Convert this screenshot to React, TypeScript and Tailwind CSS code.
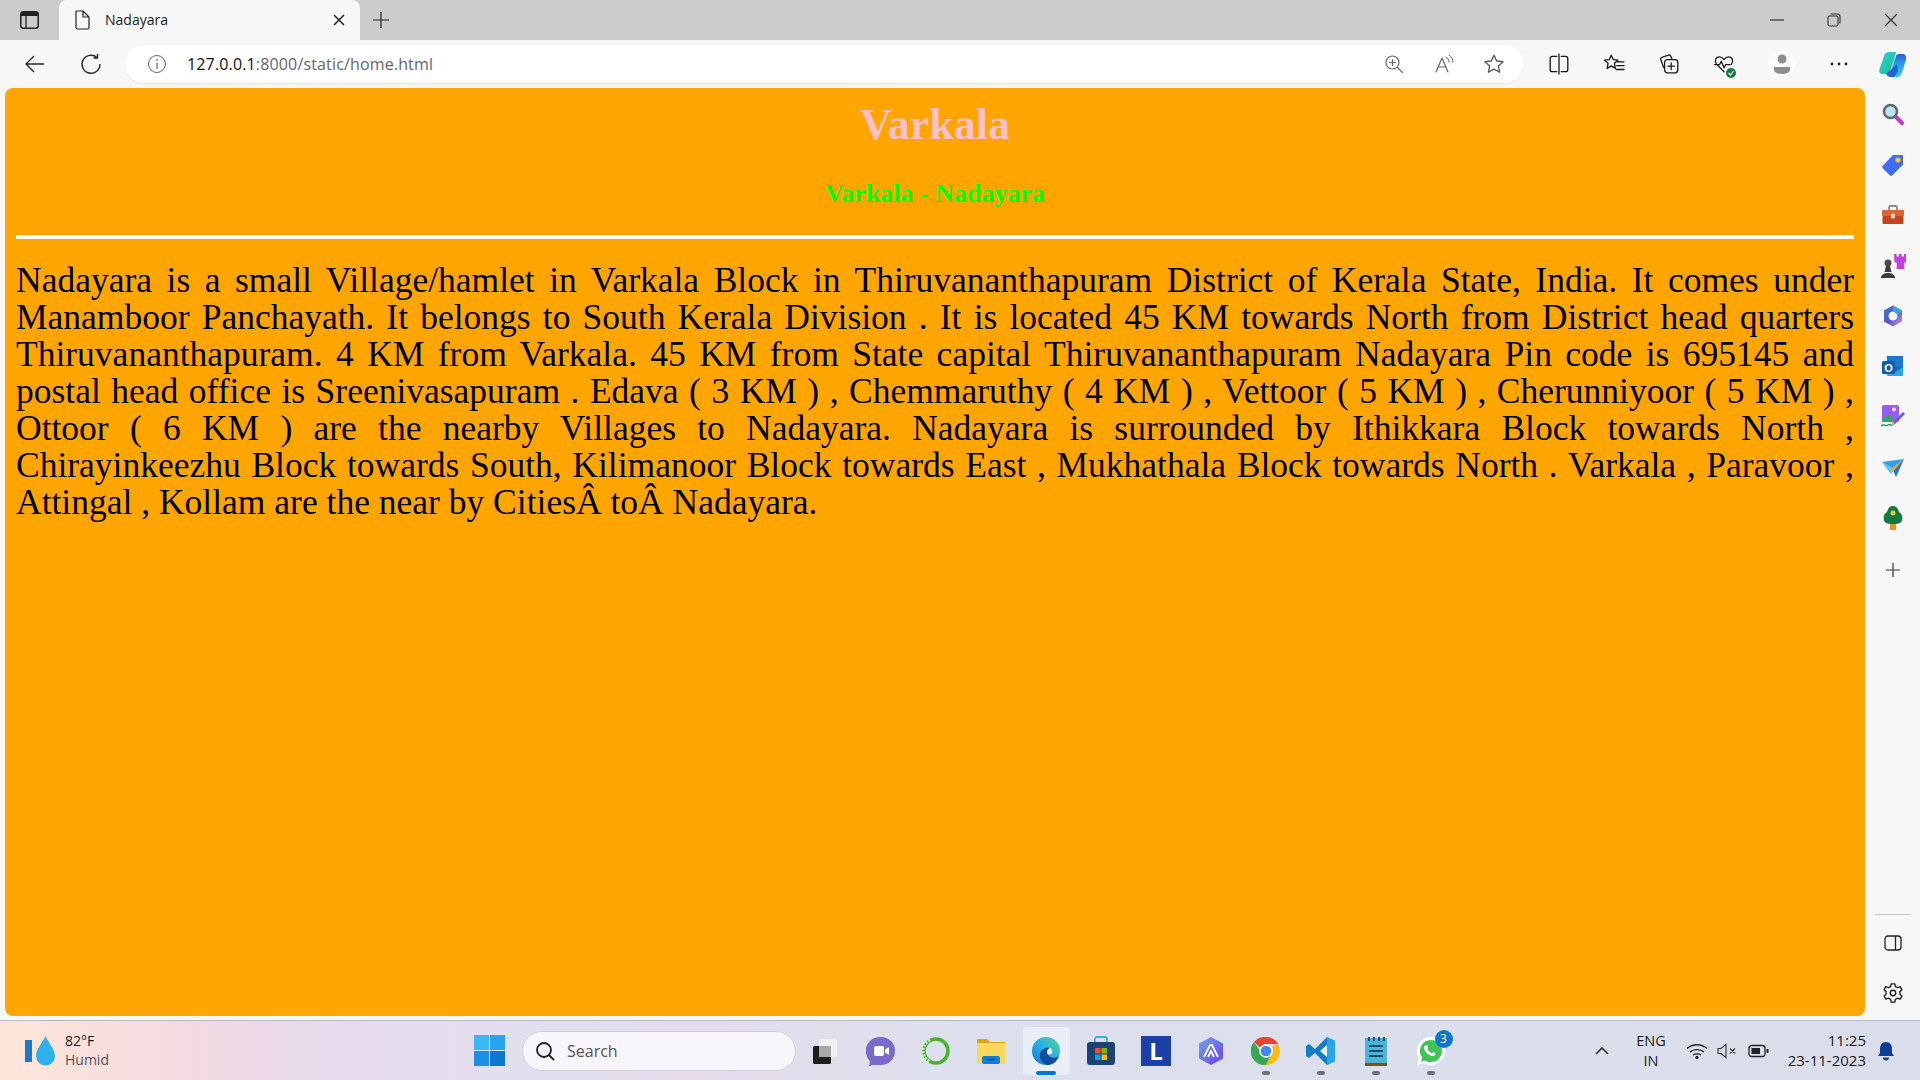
import React from 'react';

const ui = { fontFamily: '"Open Sans", "Noto Sans", sans-serif' };

const Stroke = ({ size = 20, children }: { size?: number; children: React.ReactNode }) => (
  <svg width={size} height={size} viewBox="0 0 20 20" fill="none" stroke="currentColor" strokeWidth="1.2" strokeLinecap="round" strokeLinejoin="round">
    {children}
  </svg>
);

const Slot = ({ w, children }: { w: string; children?: React.ReactNode }) => (
  <div className={`${w} flex shrink-0 items-center justify-center`}>{children}</div>
);

const Copilot = () => (
  <svg width="30" height="27" viewBox="0 0 30 27">
    <defs>
      <linearGradient id="cp1" x1="0" y1="0" x2="1" y2="1"><stop offset="0" stopColor="#35c6f0" /><stop offset=".6" stopColor="#1fc8a0" /><stop offset="1" stopColor="#2f9fe8" /></linearGradient>
      <linearGradient id="cp2" x1="0" y1="0" x2="0" y2="1"><stop offset="0" stopColor="#2b5fd9" /><stop offset=".5" stopColor="#2aa3f0" /><stop offset="1" stopColor="#38c8f5" /></linearGradient>
    </defs>
    <path d="M11 1h7l-2 8-5 14H5C2 23 .5 21 1.500 18L6 5c.7-2.500 2.500-4 5-4z" fill="url(#cp1)" />
    <path d="M19 26h-8l3-9 4-12c.5-1.500 2-2 4-2h2.500c3 0 4.500 2.500 3.500 5.500l-4 13c-.7 2.500-2.500 4.500-5 4.500z" fill="url(#cp2)" />
    <path d="M8 23l11-10 1 8-4 5h-4c-1.500 0-3-1-4-3z" fill="#1f55cf" opacity=".85" />
  </svg>
);

const SideIcons = [
  <svg key="s" width="24" height="24" viewBox="0 0 24 24"><path d="M14 14l7 7" stroke="#c637c9" strokeWidth="4" strokeLinecap="round" /><circle cx="9.500" cy="9.500" r="6.500" fill="#bfe3f5" stroke="#5d6a72" strokeWidth="2.500" /></svg>,
  <svg key="t" width="24" height="24" viewBox="0 0 24 24"><path d="M12 2h9a1 1 0 0 1 1 1v8.500L11 22.500a1.500 1.500 0 0 1-2 0L1.500 15a1.500 1.500 0 0 1 0-2z" fill="#3f6df2" /><circle cx="17" cy="7" r="2.500" fill="#f6c83c" stroke="#c9a12c" strokeWidth=".6" /></svg>,
  <svg key="b" width="24" height="24" viewBox="0 0 24 24"><path d="M8 7V4.500A1.500 1.500 0 0 1 9.500 3h5A1.500 1.500 0 0 1 16 4.500V7" fill="none" stroke="#8a8a8a" strokeWidth="1.800" /><rect x="1" y="7" width="22" height="6" rx="1" fill="#e0622e" /><rect x="1.500" y="13" width="21" height="8" rx="1" fill="#c2451c" /><rect x="10" y="10.500" width="4" height="5" rx="1" fill="#d5d5d5" /></svg>,
  <svg key="c" width="26" height="26" viewBox="0 0 26 26"><path d="M14 1h2.500v2.500h2.500V1h2.500v2.500H24V1h2v8l-2 1 .5 6h-8l.5-6-2.500-1z" fill="#c23fe6" /><circle cx="8" cy="10" r="3.500" fill="#4a4a4a" /><path d="M6 13h4l1.500 6h-7zM1 25c0-3 2.500-5 7-5s7 2 7 5z" fill="#3c3c3c" /></svg>,
  <svg key="m" width="24" height="24" viewBox="0 0 24 24"><defs><linearGradient id="m3" x1="0" y1="0" x2="1" y2="1"><stop offset="0" stopColor="#2b7cd3" /><stop offset=".5" stopColor="#5b54c9" /><stop offset="1" stopColor="#c99ae8" /></linearGradient></defs><path d="M12 1.500l9 5v11l-9 5-9-5v-11z" fill="url(#m3)" /><circle cx="12" cy="12" r="4.500" fill="#f7f7f7" /><path d="M12 1.500l9 5-4 4-5-3z" fill="#37a6e8" /></svg>,
  <svg key="o" width="24" height="24" viewBox="0 0 24 24"><rect x="6" y="1" width="16" height="11" fill="#1a78d0" /><path d="M6 12h16v8a1 1 0 0 1-1 1H7a1 1 0 0 1-1-1z" fill="#28a8ea" /><path d="M6 12l8 5 8-5" fill="#0f6cbd" /><rect x="1" y="6" width="13" height="13" rx="1.500" fill="#0f5fa8" /><text x="7.500" y="16.500" textAnchor="middle" fontSize="11" fontWeight="700" fill="#fff" fontFamily="Liberation Sans">O</text></svg>,
  <svg key="i" width="26" height="26" viewBox="0 0 26 26"><rect x="2" y="1" width="17" height="17" rx="2" fill="#9a5cf0" /><circle cx="14" cy="5.500" r="2" fill="#ede3ff" /><path d="M2 16l6-6 6 6v2H2z" fill="#2fa866" /><path d="M13 18l10-10 2 2-10 10-3 1z" fill="#6a5ae8" /><path d="M13 18l2 2-3 2z" fill="#f4b63e" /><path d="M1 22c3-3 4 1 7-1s3 1 4 0" fill="none" stroke="#1c9c6a" strokeWidth="1.400" /></svg>,
  <svg key="p" width="24" height="24" viewBox="0 0 24 24"><path d="M1 6l22-3-12 9z" fill="#2da0ee" /><path d="M23 3L11 12l4 9z" fill="#1878d8" /><path d="M23 3L11 12l-1 6z" fill="#f4a21f" /><path d="M1 6l10 6-1 6z" fill="#58bdf5" /></svg>,
  <svg key="g" width="24" height="26" viewBox="0 0 24 26"><rect x="9" y="17" width="6" height="8" fill="#e8951f" /><path d="M12 1c4 0 5 3 6 6 3 2 4 5 3 8-.5 3-3 4-9 4s-8.500-1-9-4c-1-3 0-6 3-8 1-3 2-6 6-6z" fill="#127a3e" /><circle cx="12" cy="8" r="2.500" fill="#f4c430" /></svg>,
];

const Toolbar = () => (
  <div className="flex h-12 shrink-0 items-center bg-[#f7f7f7] text-[#1b1b1b]">
    <Slot w="w-[70px]">
      <svg width="22" height="22" viewBox="0 0 22 22" fill="none" stroke="#2a2a2a" strokeWidth="1.400"><path d="M20 11H2M10 3l-8 8 8 8" /></svg>
    </Slot>
    <Slot w="w-[42px]">
      <svg width="22" height="22" viewBox="0 0 22 22" fill="none" stroke="#2a2a2a" strokeWidth="1.400"><path d="M17 4.500A9 9 0 1 0 20 11M17.500 1v4h-4" /></svg>
    </Slot>
    <div className="w-[13px] shrink-0" />
    <div className="flex h-[38px] w-[1399px] shrink-0 items-center rounded-[19px] bg-white shadow-[0_1px_2px_rgba(0,0,0,0.08)]">
      <Slot w="w-[64px]">
        <Stroke>
          <circle cx="10" cy="10" r="8.500" stroke="#666" strokeWidth="1" />
          <path d="M10 9v5.500" stroke="#666" />
          <path d="M10 5.800v.4" stroke="#666" strokeWidth="1.500" />
        </Stroke>
      </Slot>
      <div className="-ml-0.5 flex-1 text-[16px] tracking-[0.15px]" style={ui}>
        <span className="text-[#111]">127.0.0.1</span>
        <span className="text-[#66666b]">:8000/static/home.html</span>
      </div>
      <Slot w="w-[50px]">
        <Stroke>
          <circle cx="8.500" cy="8.500" r="6.500" stroke="#666" />
          <path d="M13.500 13.500L18.500 18.500M8.500 5.500v6M5.500 8.500h6" stroke="#666" />
        </Stroke>
      </Slot>
      <Slot w="w-[50px]">
        <Stroke>
          <path d="M2 18L8 4l6 14M4.500 13h7" stroke="#666" />
          <path d="M12 3c2 1 3 3 3 5M15 1c2.500 1.500 4 4 4 7" stroke="#666" strokeWidth="1" />
        </Stroke>
      </Slot>
      <Slot w="w-[50px]">
        <Stroke size={22}>
          <path d="M10 2l2.400 5.300 5.800.6-4.300 3.900 1.200 5.700L10 14.600l-5.100 2.900 1.200-5.700L1.800 7.900l5.800-.6z" stroke="#555" />
        </Stroke>
      </Slot>
      <div className="w-[5px] shrink-0" />
    </div>
    <div className="w-[7px] shrink-0" />
    <Slot w="w-[55px]">
      <Stroke size={22}>
        <path d="M8 3H4a2 2 0 0 0-2 2v10a2 2 0 0 0 2 2h4M12 3h4a2 2 0 0 1 2 2v10a2 2 0 0 1-2 2h-4M10 1v18" />
      </Stroke>
    </Slot>
    <Slot w="w-[55px]">
      <Stroke size={22}>
        <path d="M7.500 2l1.800 4 4.200.5-3.100 2.900.8 4.600-3.700-2.300L3.800 14l.8-4.600L1.500 6.500 5.700 6zM13 8h6M12.500 11.500H19M12 15h7" />
      </Stroke>
    </Slot>
    <Slot w="w-[55px]">
      <Stroke size={22}>
        <path d="M5 13L2.500 6a1.500 1.500 0 0 1 1-2l6-2a1.500 1.500 0 0 1 2 .7L12.500 5" />
        <rect x="6" y="6" width="12" height="12" rx="2.500" />
        <path d="M12 9v6M9 12h6" />
      </Stroke>
    </Slot>
    <div className="relative flex w-[55px] shrink-0 items-center justify-center">
      <Stroke size={22}>
        <path d="M10 17L3.500 10.500C1 8 2 3.500 6 3.500c2 0 3 1.200 4 2.500 1-1.300 2-2.500 4-2.500 4 0 5 4.500 2.500 7" />
        <path d="M1.500 10.500H6l1.500-3 2.500 6 1.500-3h4" />
      </Stroke>
      <div className="absolute bottom-[-3px] left-[30px] flex h-[10px] w-[10px] items-center justify-center rounded-full bg-[#107c41]">
        <svg width="8" height="8" viewBox="0 0 8 8" fill="none" stroke="#fff" strokeWidth="1.200"><path d="M1.500 4l2 2 3-4" /></svg>
      </div>
    </div>
    <Slot w="w-[60px]">
      <div className="ml-0.5 flex h-[28px] w-[28px] items-center justify-center rounded-full bg-[#fbfbfb]">
        <svg width="18" height="22" viewBox="0 0 18 22" fill="#8e8e8e"><circle cx="9" cy="6" r="4.500" /><path d="M1 14h16v2.500c0 3-3.500 4.500-8 4.500s-8-1.500-8-4.500z" /></svg>
      </div>
    </Slot>
    <Slot w="w-[55px]">
      <svg width="20" height="4" viewBox="0 0 20 4" fill="#222"><circle cx="3" cy="2" r="1.400" /><circle cx="10" cy="2" r="1.400" /><circle cx="17" cy="2" r="1.400" /></svg>
    </Slot>
    <Slot w="w-[54px]"><Copilot /></Slot>
  </div>
);

const TabStrip = () => (
  <div className="flex h-10 shrink-0 bg-[#cccccc] text-[#1b1b1b]">
    <Slot w="w-[59px]">
      <svg width="19" height="18" viewBox="0 0 19 18">
        <rect x=".8" y=".8" width="17.400" height="16.400" rx="2.500" fill="none" stroke="#222" strokeWidth="1.500" />
        <path d="M1 3a2 2 0 0 1 2-2h13a2 2 0 0 1 2 2v2H1z" fill="#222" />
        <path d="M6 5v12" stroke="#222" strokeWidth="1.300" />
      </svg>
    </Slot>
    <div className="flex w-[301px] shrink-0 items-center rounded-t-lg bg-[#f7f7f7]">
      <Slot w="w-[46px]">
        <svg width="16" height="20" viewBox="0 0 16 20" fill="none" stroke="#222" strokeWidth="1.200" strokeLinejoin="round"><path d="M3 1h6l6 6v10.500a1.500 1.500 0 0 1-1.500 1.500h-10A1.500 1.500 0 0 1 2 17.500V2a1 1 0 0 1 1-1zM9 1v6h6" /></svg>
      </Slot>
      <span className="-mt-0.5 flex-1 text-[14px] text-[#222]" style={ui}>Nadayara</span>
      <Slot w="w-[42px]">
        <svg width="12" height="12" viewBox="0 0 12 12" stroke="#222" strokeWidth="1.500"><path d="M1 1l10 10M11 1L1 11" /></svg>
      </Slot>
    </div>
    <Slot w="w-[42px]">
      <svg width="18" height="18" viewBox="0 0 18 18" stroke="#222" strokeWidth="1.200"><path d="M9 1v16M1 9h16" /></svg>
    </Slot>
    <div className="flex-1" />
    <Slot w="w-[57px]">
      <svg width="14" height="2" viewBox="0 0 14 2" stroke="#333" strokeWidth="1.200"><path d="M0 1h14" /></svg>
    </Slot>
    <Slot w="w-[57px]">
      <svg width="14" height="14" viewBox="0 0 14 14" fill="none" stroke="#333" strokeWidth="1.100"><rect x="1" y="3" width="10" height="10" rx="1.500" /><path d="M3.500 1h7A2.500 2.500 0 0 1 13 3.500v7" /></svg>
    </Slot>
    <Slot w="w-[58px]">
      <svg width="14" height="14" viewBox="0 0 14 14" stroke="#333" strokeWidth="1.200"><path d="M1 1l12 12M13 1L1 13" /></svg>
    </Slot>
  </div>
);

const Sidebar = () => (
  <div className="flex w-[55px] shrink-0 flex-col items-center pt-px">
    {SideIcons.map((icon) => (
      <div key={icon.key} className="flex h-[50.500px] w-full items-center justify-center">{icon}</div>
    ))}
    <div className="flex h-[52px] items-center justify-center text-[#333]">
      <svg width="18" height="18" viewBox="0 0 18 18" stroke="#333" strokeWidth="1.200"><path d="M9 2v14M2 9h14" /></svg>
    </div>
    <div className="flex-1" />
    <div className="h-px w-[35px] bg-[#c4c4c4]" />
    <div className="flex h-[56px] items-center justify-center">
      <svg width="18" height="16" viewBox="0 0 18 16" fill="none" stroke="#222" strokeWidth="1.300"><rect x="1" y="1" width="16" height="14" rx="3" /><path d="M11.500 1v14" /></svg>
    </div>
    <div className="mb-[5px] flex h-[44px] items-center justify-center">
      <svg width="22" height="22" viewBox="0 0 24 24" fill="none" stroke="#222" strokeWidth="1.500" strokeLinejoin="round"><circle cx="12" cy="12" r="3" /><path d="M10 2h4l.6 3 2.400 1.200 2.800-1.100 2 3.400-2.300 2 .1 2.800 2.200 1.900-2 3.400-2.800-1-2.400 1.400L14 22h-4l-.6-3-2.400-1.400-2.800 1-2-3.400 2.200-1.900.1-2.800-2.300-2 2-3.400 2.800 1.100L9.400 5z" /></svg>
    </div>
  </div>
);

const justified = [
  'Nadayara is a small Village/hamlet in Varkala Block in Thiruvananthapuram District of Kerala State, India. It comes under',
  'Manamboor Panchayath. It belongs to South Kerala Division . It is located 45 KM towards North from District head quarters',
  'Thiruvananthapuram. 4 KM from Varkala. 45 KM from State capital Thiruvananthapuram Nadayara Pin code is 695145 and',
  'postal head office is Sreenivasapuram . Edava ( 3 KM ) , Chemmaruthy ( 4 KM ) , Vettoor ( 5 KM ) , Cherunniyoor ( 5 KM ) ,',
  'Ottoor ( 6 KM ) are the nearby Villages to Nadayara. Nadayara is surrounded by Ithikkara Block towards North ,',
  'Chirayinkeezhu Block towards South, Kilimanoor Block towards East , Mukhathala Block towards North . Varkala , Paravoor ,',
];

const Page = () => (
  <div className="h-[928px] w-[1860px] shrink-0 rounded-lg bg-[#ffa500] px-[11px] font-['Liberation_Serif',serif]">
    <h1 className="pt-[13px] text-center text-[44px] leading-[48px] font-bold text-[#ffc0cb]">Varkala</h1>
    <h2 className="mt-[31px] text-center text-[26px] leading-[28px] font-bold text-[#00ff00]">Varkala - Nadayara</h2>
    <div className="mt-[27px] h-1 bg-white" />
    <div className="mt-[23px] text-[35.500px] leading-[37px] text-black">
      {justified.map((line) => (
        <p key={line} className="whitespace-nowrap text-justify [text-align-last:justify]">{line}</p>
      ))}
      <p>Attingal , Kollam are the near by CitiesÂ toÂ Nadayara.</p>
    </div>
  </div>
);

const AppIcons = [
  <svg key="tv" width="30" height="30" viewBox="0 0 30 30"><rect x="2" y="10" width="18" height="18" rx="1.500" fill="#1d1d1d" /><rect x="8" y="3" width="18" height="18" rx="1.500" fill="#f2f2f2" opacity=".85" /><rect x="8" y="10" width="12" height="11" fill="#a8a8a8" /></svg>,
  <svg key="meet" width="30" height="30" viewBox="0 0 30 30"><path d="M15 1a14 14 0 0 1 0 28H6l-3 2 1-6A14 14 0 0 1 15 1z" fill="#7b6ac9" /><rect x="8" y="10" width="10" height="10" rx="2" fill="#fff" /><path d="M19 13.500l4-2.500v8l-4-2.500z" fill="#fff" /></svg>,
  <svg key="ring" width="30" height="30" viewBox="0 0 30 30" fill="none"><circle cx="15" cy="15" r="12" stroke="#46b52c" strokeWidth="3.500" /><path d="M9 4a12 12 0 0 0 0 22" stroke="#cfe8c8" strokeWidth="3.500" strokeDasharray="2 1.500" /></svg>,
  <svg key="f" width="30" height="30" viewBox="0 0 30 30"><path d="M1 4a1 1 0 0 1 1-1h9l3 3h15v5H1z" fill="#dca313" /><path d="M1 7h28v21H1z" fill="#fbd75b" /><rect x="6" y="20" width="18" height="8" rx="2" fill="#0f7fd1" /><path d="M11 23.500h8" stroke="#0a4f88" strokeWidth="1.500" /></svg>,
  <svg key="e" width="30" height="30" viewBox="0 0 30 30"><defs><linearGradient id="ed" x1="0" y1="1" x2="1" y2="0"><stop offset="0" stopColor="#0b78d8" /><stop offset=".55" stopColor="#2bb3e6" /><stop offset="1" stopColor="#54d873" /></linearGradient></defs><circle cx="15" cy="15" r="14" fill="url(#ed)" /><path d="M28 20c-2 1.500-4.500 2-7 1.500-3-.5-5-3-5-5.500s1-3 3-4c-3-1-9 0-10 6-1 5 3 11 8 11 5 0 9-4 11-9z" fill="#0c4da0" /><path d="M19 12c2 1 3 3 2 5s-4 2-5 0c0-3 1-4 3-5z" fill="#f0f3fa" /></svg>,
  <svg key="st" width="30" height="30" viewBox="0 0 30 30"><path d="M9 6V3a2 2 0 0 1 2-2h8a2 2 0 0 1 2 2v3" fill="none" stroke="#2cb3e8" strokeWidth="1.800" /><rect x="1" y="6" width="28" height="23" rx="3" fill="#1d4470" /><rect x="9" y="12" width="5.500" height="5.500" fill="#f25022" /><rect x="15.500" y="12" width="5.500" height="5.500" fill="#7fba00" /><rect x="9" y="18.500" width="5.500" height="5.500" fill="#00a4ef" /><rect x="15.500" y="18.500" width="5.500" height="5.500" fill="#ffb900" /></svg>,
  <div key="l" className="flex h-[30px] w-[30px] items-center justify-center bg-[#1c3fa8] text-[24px] leading-none font-bold text-white" style={ui}>L</div>,
  <svg key="a" width="30" height="30" viewBox="0 0 30 30"><defs><linearGradient id="ar" x1="0" y1="0" x2="1" y2="1"><stop offset="0" stopColor="#6ea6ec" /><stop offset="1" stopColor="#6a3ff0" /></linearGradient></defs><path d="M15 1l12 6.500v15L15 29 3 22.500v-15z" fill="url(#ar)" /><path d="M8 21l6-12 2 0 6 12M12 21l3-6 3 6" fill="none" stroke="#fff" strokeWidth="1.800" /></svg>,
  <svg key="c" width="30" height="30" viewBox="0 0 30 30"><path d="M15 1a14 14 0 0 1 12.100 7H15a7 7 0 0 0-6.100 3.500L3 5.900A14 14 0 0 1 15 1z" fill="#ea4335" /><path d="M27.100 8A14 14 0 0 1 15 29l5.900-10.500A7 7 0 0 0 21 11z" fill="#fbbc05" /><path d="M3 5.900L9 15a7 7 0 0 0 11 3.500L15 29A14 14 0 0 1 3 5.900z" fill="#34a853" /><circle cx="15" cy="15" r="6" fill="#4285f4" stroke="#fff" strokeWidth="1.500" /></svg>,
  <svg key="v" width="30" height="30" viewBox="0 0 30 30"><path d="M21 1l8 4v20l-8 4L9 17l-6 5-3-2v-10l3-2 6 5z" fill="#0f7ec9" /><path d="M21 1l8 4v20l-8 4z" fill="#24a7ee" /><path d="M21 9v12l-7-6z" fill="#f2f5fb" /></svg>,
  <svg key="n" width="24" height="32" viewBox="0 0 24 32"><rect x="1" y="3" width="22" height="27" fill="#4cb4d8" /><rect x="1" y="28" width="22" height="3" fill="#8a4a20" /><path d="M5 2v4M10 2v4M15 2v4M20 2v4" stroke="#1d4e6e" strokeWidth="2" /><path d="M5 11h14M5 16h14M5 21h14" stroke="#17506e" strokeWidth="1.800" /></svg>,
];

const Taskbar = () => (
  <div className="flex h-[60px] shrink-0 items-center border-t border-[#b9b9c4] bg-[linear-gradient(90deg,#fde6d8_0%,#f2d9e3_11%,#e8dcee_17%,#e2e0ee_28%,#e6dcec_36%,#dde0ec_50%,#d9deea_100%)] text-[#1b1b1b]" style={ui}>
    <div className="w-[25px] shrink-0" />
    <svg width="30" height="30" viewBox="0 0 30 30" className="shrink-0">
      <rect x="0" y="4" width="7" height="22" fill="#1a78c8" />
      <path d="M20.500 0c3 7 9.500 13 9.500 20a9.500 9.500 0 0 1-19 0c0-7 6.500-13 9.500-20z" fill="#2eb0e8" />
    </svg>
    <div className="-mt-0.5 ml-[10px] w-[100px] shrink-0 text-[14px] leading-[19px]">
      <div>82°F</div>
      <div className="text-[#555]">Humid</div>
    </div>
    <div className="w-[309px] shrink-0" />
    <svg width="31" height="31" viewBox="0 0 31 31" className="shrink-0">
      <rect width="15" height="15" fill="#39b8f5" />
      <rect x="16" width="15" height="15" fill="#2aa4ee" />
      <rect y="16" width="15" height="15" fill="#1a8fe3" />
      <rect x="16" y="16" width="15" height="15" fill="#0b78d4" />
    </svg>
    <div className="ml-[17px] flex h-[40px] w-[274px] shrink-0 items-center rounded-full border border-[#cfcfdc] bg-[#f8f6fb]">
      <svg width="22" height="22" viewBox="0 0 22 22" fill="none" stroke="#222" strokeWidth="1.800" className="ml-[11px]"><circle cx="10" cy="10" r="7" /><path d="M15 15l5 5" /></svg>
      <span className="ml-[11px] text-[16px] text-[#555]">Search</span>
    </div>
    <div className="w-[2.500px] shrink-0" />
    <div className="flex shrink-0">
      {AppIcons.map((icon) => (
        <div key={icon.key} className={`relative flex h-[48px] items-center justify-center rounded ${icon.key === 'e' ? 'mx-1 w-[47px] bg-[#eceef7]' : 'w-[55px]'}`}>
          {icon}
          {icon.key === 'e' && <div className="absolute bottom-0 h-[4px] w-[20px] rounded-full bg-[#0078d4]" />}
          {(icon.key === 'c' || icon.key === 'v' || icon.key === 'n') && <div className="absolute bottom-0 h-[4px] w-[8px] rounded-full bg-[#6e6e78]" />}
        </div>
      ))}
      <div className="relative flex h-[48px] w-[55px] items-center justify-center">
        <svg width="30" height="30" viewBox="0 0 30 30"><path d="M15 1a14 14 0 0 1 0 28c-2.500 0-5-.6-7-1.800L1 29l1.900-6.800A14 14 0 0 1 15 1z" fill="#fff" /><path d="M15 4a11 11 0 0 1 0 22c-2 0-4-.5-5.700-1.500l-4.300 1.200 1.200-4.100A11 11 0 0 1 15 4z" fill="#3fc555" /><path d="M10.500 9c2 0 1.500 3 1 3.500.5 2 2 3.500 4.500 4.500 1-1 3-1 3.500 1 .3 1.500-2 2.500-3.500 2-4-1-7.500-4.500-8-8 0-1.500 1-3 2.500-3z" fill="#fff" /></svg>
        <div className="absolute top-[3px] right-[6px] flex h-[18px] w-[18px] items-center justify-center rounded-full bg-[#0a78cf] text-[12px] text-white">3</div>
        <div className="absolute bottom-0 h-[4px] w-[8px] rounded-full bg-[#6e6e78]" />
      </div>
    </div>
    <div className="flex-1" />
    <Slot w="w-[30px]">
      <svg width="14" height="8" viewBox="0 0 14 8" fill="none" stroke="#222" strokeWidth="1.500"><path d="M1 7l6-6 6 6" /></svg>
    </Slot>
    <div className="ml-[13px] w-[42px] shrink-0 text-center text-[14.500px] leading-[20px]">
      <div>ENG</div>
      <div>IN</div>
    </div>
    <div className="w-[13px] shrink-0" />
    <Slot w="w-[24px]">
      <svg width="22" height="16" viewBox="0 0 22 16" fill="none" stroke="#222" strokeWidth="1.300"><path d="M1 5.500c5.500-5 14.500-5 20 0M4 9c3.500-3.200 10.500-3.200 14 0M7 12c2-1.500 6-1.500 8 0" /><circle cx="11" cy="14.500" r="1" fill="#222" /></svg>
    </Slot>
    <div className="w-[6px] shrink-0" />
    <Slot w="w-[24px]">
      <svg width="20" height="16" viewBox="0 0 20 16" fill="none" stroke="#333" strokeWidth="1.100"><path d="M1 5.500h3L9 1.500v13l-5-4H1zM13 5.500l5 5M18 5.500l-5 5" /></svg>
    </Slot>
    <div className="w-[7px] shrink-0" />
    <Slot w="w-[24px]">
      <svg width="21" height="14" viewBox="0 0 21 14" fill="none" stroke="#222" strokeWidth="1.300"><rect x="1" y="1.500" width="16" height="11" rx="2.500" /><rect x="3.500" y="4" width="8.500" height="6" fill="#222" stroke="none" /><path d="M19.500 5v4" strokeWidth="2" /></svg>
    </Slot>
    <div className="-mt-0.5 w-[96px] shrink-0 text-right text-[15px] leading-[20px]">
      <div>11:25</div>
      <div>23-11-2023</div>
    </div>
    <Slot w="w-[40px]">
      <svg width="18" height="20" viewBox="0 0 18 20" fill="#0b3f94"><path d="M9 1c4 0 6 3 6 7v4l2 3H1l2-3V8c0-4 2-7 6-7z" /><path d="M6 16.500h6a3 3 0 0 1-6 0z" /></svg>
    </Slot>
    <div className="w-[14px] shrink-0" />
  </div>
);

const App = (): React.ReactElement => (
  <div className="flex h-screen w-[1920px] flex-col overflow-hidden bg-[#f7f7f7]">
    <TabStrip />
    <Toolbar />
    <div className="flex h-[932px] shrink-0">
      <div className="w-[5px] shrink-0" />
      <Page />
      <Sidebar />
    </div>
    <Taskbar />
  </div>
);

export default App;
